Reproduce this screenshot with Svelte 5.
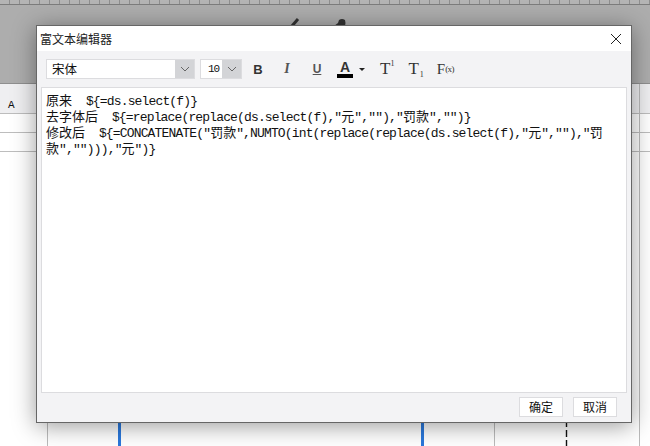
<script>
  const lines = [
    '原来  ${=ds.select(f)}',
    '去字体后  ${=replace(replace(ds.select(f),"元",""),"罚款","")}',
    '修改后  ${=CONCATENATE("罚款",NUMTO(int(replace(replace(ds.select(f),"元",""),"罚',
    '款",""))),"元")}'
  ];
  const split = (s) => s.match(/[\u4e00-\u9fff]+|[^\u4e00-\u9fff]+/g).map((t) => ({ t, cjk: /[\u4e00-\u9fff]/.test(t) }));
  const rows = lines.map(split);
</script>

<div class="page">
  <div class="ruler"></div>
  <div class="band"></div>
  <div class="sheet">
    <div class="head"><span class="col-a">A</span></div>
    <div class="row"></div>
    <div class="row"></div>
    <div class="grid"></div>
  </div>

  <svg class="marks" width="650" height="446" viewBox="0 0 650 446">
    <path d="M292 26 L298 19" stroke="#333" stroke-width="3" fill="none" />
    <path d="M334 26 L338 23 L339 20 Q342 18 345 20 Q346 23 345 26 Z" fill="#333" />
    <rect x="118" y="420" width="3" height="26" fill="#2a78dc" />
    <rect x="421" y="420" width="3" height="26" fill="#2a78dc" />
    <path d="M566.5 420 V446" stroke="#111" stroke-width="1.4" stroke-dasharray="7 3" />
  </svg>

  <div class="dialog">
    <header>
      <span class="title">富文本编辑器</span>
      <svg class="close" width="12" height="12" viewBox="0 0 12 12"><path d="M1 1 L11 11 M11 1 L1 11" stroke="#222" stroke-width="1" fill="none" /></svg>
    </header>

    <div class="toolbar">
      <div class="combo font">
        <span class="value">宋体</span>
        <span class="arrow"><svg width="10" height="6" viewBox="0 0 10 6"><path d="M1 1 L5 5 L9 1" stroke="#666" fill="none" /></svg></span>
      </div>
      <div class="combo size">
        <span class="value">10</span>
        <span class="arrow"><svg width="10" height="6" viewBox="0 0 10 6"><path d="M1 1 L5 5 L9 1" stroke="#666" fill="none" /></svg></span>
      </div>
      <div class="tools">
        <span class="tool b">B</span>
        <span class="tool i">I</span>
        <span class="tool u">U</span>
        <span class="tool color"><span class="a">A</span><span class="bar"></span></span>
        <span class="caret"></span>
        <span class="tool t">T<sup>1</sup></span>
        <span class="tool t sub">T<sub>1</sub></span>
        <span class="tool t fx">F<small>(x)</small></span>
      </div>
    </div>

    <div class="editor">
      {#each rows as row}
        <div class="line">{#each row as s}<span class={s.cjk ? 'cjk' : 'asc'}>{s.t}</span>{/each}</div>
      {/each}
    </div>

    <footer>
      <button>确定</button>
      <button>取消</button>
    </footer>
  </div>
</div>

<style>
  :global(body) { margin: 0; background: #fff; overflow: hidden; }
  .page { position: relative; width: 650px; height: 446px; overflow: hidden; display: flex; flex-direction: column; font-family: "Noto Sans CJK SC", sans-serif; }
  .ruler { height: 4px; flex: none; background: repeating-linear-gradient(90deg, #b4b4b4 0 9px, #8e8e8e 9px 10px); border-bottom: 1px solid #7c7c7c; }
  .band { height: 78px; flex: none; background: #adadad; border-bottom: 1px solid #8f8f8f; }
  .sheet { position: relative; flex: 1; background: #fff; }
  .head { height: 30px; box-sizing: border-box; background: #efeff1; border-bottom: 1px solid #bdbdbd; position: relative; }
  .col-a { position: absolute; left: 8px; top: 15px; font: 11px/12px "Liberation Mono", monospace; color: #111; }
  .row { height: 19px; box-sizing: border-box; border-bottom: 1px solid #bdbdbd; }
  .grid { position: absolute; left: 47px; right: 10px; top: 0; bottom: 0; border-left: 1px solid #bbb; border-right: 1px solid #bbb; }
  .grid::after { content: ""; position: absolute; left: 446px; top: 0; bottom: 0; border-left: 1px solid #bbb; }
  .marks { position: absolute; left: 0; top: 0; }

  .dialog { position: absolute; left: 36px; top: 25px; width: 596px; height: 398px; box-sizing: border-box; border: 1px solid #666; background: #f3f3f5; display: flex; flex-direction: column; box-shadow: 0 3px 22px rgba(0, 0, 0, 0.4); }
  header { height: 25px; flex: none; background: #fff; display: flex; align-items: center; justify-content: space-between; padding: 0 9px 0 3px; }
  .title { font-size: 12px; color: #222; }
  .toolbar { height: 36px; flex: none; display: flex; align-items: center; padding: 0 0 0 9px; }
  .combo { height: 20px; box-sizing: border-box; display: flex; background: #fff; border: 1px solid #dcdcdf; }
  .font { width: 149px; }
  .size { width: 42px; margin-left: 5px; }
  .value { flex: 1; font-size: 12.5px; line-height: 18px; padding-left: 5px; color: #111; }
  .size .value { font: 11px/18px "Liberation Mono", monospace; padding-left: 7px; letter-spacing: -1px; }
  .arrow { width: 19px; background: #d3d4d7; display: flex; align-items: center; justify-content: center; }
  .tools { display: flex; align-items: center; position: relative; height: 36px; }
  .tool { color: #444; display: block; text-align: center; }
  .b { margin-left: 10px; width: 12px; font: bold 13px "Liberation Sans", sans-serif; color: #333; }
  .i { margin-left: 17px; width: 12px; font: italic bold 14px "Liberation Serif", serif; color: #555; }
  .u { margin-left: 18px; width: 12px; font: bold 12px "Liberation Sans", sans-serif; text-decoration: underline; color: #555; }
  .color { margin-left: 14px; width: 16px; display: flex; flex-direction: column; align-items: center; }
  .a { font: bold 14px/13px "Liberation Sans", sans-serif; color: #333; }
  .bar { width: 16px; height: 4px; background: #000; }
  .caret { margin-left: 6px; width: 0; height: 0; border: 3px solid transparent; border-top: 3px solid #222; border-bottom: 0; }
  .t { margin-left: 15px; font: 17px "Liberation Serif", serif; color: #333; display: flex; align-items: flex-start; }
  .t sup { font-size: 8px; line-height: 10px; margin: 0; vertical-align: baseline; }
  .sub { margin-left: 14px; align-items: flex-end; }
  .t sub { font-size: 8px; line-height: 8px; margin-left: 1px; vertical-align: baseline; }
  .fx { margin-left: 13px; align-items: center; font-size: 15px; }
  .t small { font-size: 9px; letter-spacing: -0.5px; }
  .editor { flex: none; height: 306px; box-sizing: border-box; margin: 0 4px 0 4px; background: #fff; border: 1px solid #dcdcdf; padding: 4px 4px; color: #111; }
  .line { height: 16px; line-height: 16px; white-space: pre; font-size: 13px; }
  .cjk { font-family: "Noto Sans CJK SC", sans-serif; font-size: 13px; }
  .asc { font-family: "Liberation Mono", monospace; font-size: 13px; letter-spacing: -0.85px; }
  footer { flex: 1; display: flex; justify-content: flex-end; align-items: flex-start; gap: 10px; padding: 4px 14px 0 0; }
  button { width: 44px; height: 20px; box-sizing: border-box; padding: 0; background: #fff; border: 1px solid #dcdcdf; font: 12px/18px "Noto Sans CJK SC", sans-serif; color: #111; }
</style>
